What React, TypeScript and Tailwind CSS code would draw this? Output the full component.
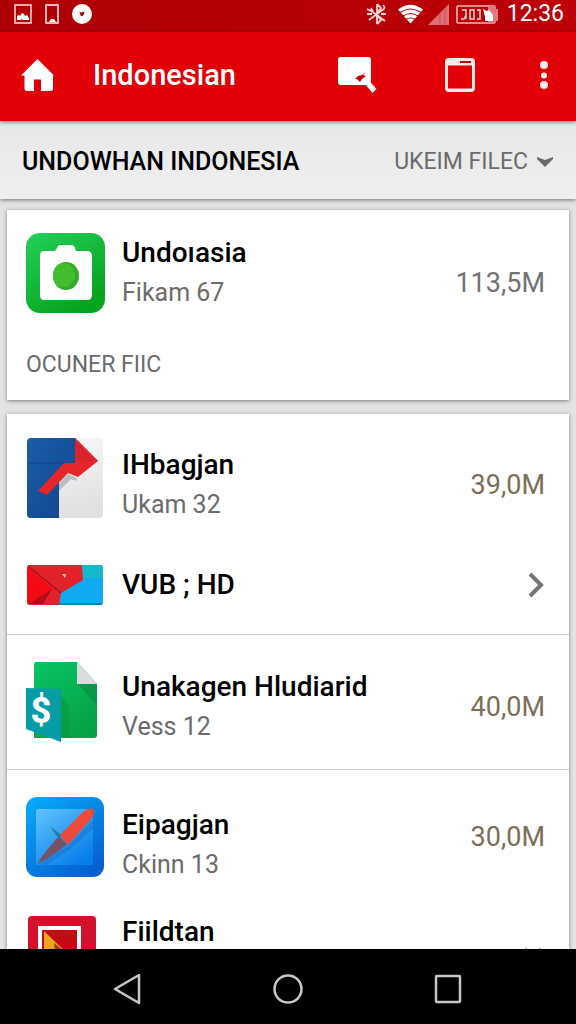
import type { ReactNode } from "react";

function StatusBar() {
  return (
    <div className="flex h-8 shrink-0 items-center justify-between bg-linear-to-r from-[#ad0005] to-[#be0008] pr-3 pl-3.5 text-white">
      <div className="flex items-center gap-3 pb-1">
        <svg width="18" height="20" viewBox="0 0 18 20" aria-hidden="true">
          <rect x="1" y="1" width="16" height="18" fill="none" stroke="#ffdcdc" strokeWidth="1.5" />
          <path d="M3 16v-4l2-1 1 1 2-3 2 1 1 2 2-1 2 3v2H9l-1-1-1 1z" fill="#fff" />
        </svg>
        <svg width="16" height="20" viewBox="0 0 16 20" aria-hidden="true">
          <rect x="2" y="1" width="12" height="18" fill="none" stroke="#ffd5d5" strokeWidth="1.7" />
          <path d="M5 18l2-3h3l2 3z" fill="#fff" />
        </svg>
        <svg width="20" height="20" viewBox="0 0 20 20" aria-hidden="true">
          <circle cx="10" cy="10" r="10" fill="#fff" />
          <path d="M7.500 8l2 .5L12.500 7.500l-.5 3-2 2-1.500-1z" fill="#8c1015" />
        </svg>
      </div>
      <div className="flex items-center pb-1">
        <svg width="21" height="22" viewBox="0 0 21 22" fill="none" stroke="#ffd5d5" strokeWidth="1.8" aria-hidden="true">
          <path d="M11 1v20M1 6l4 2 6 4 8 6M3 17l8-6 8-6M11 1l4 4-4 5M11 21l4-4-4-5M1 11h5M15 11h5M5 5l2 4M17 2l2 3" />
        </svg>
        <svg className="ml-2.5" width="27" height="20" viewBox="0 0 27 20" aria-hidden="true">
          <path d="M1 5.500Q13.500-4 26 5.500L13.500 19.500z" fill="#fff" />
          <path d="M3 8.500q10.500-7 21 0M6 12q7.500-5 15 0M9 15.500q4.500-3 9 0" fill="none" stroke="#b90006" strokeWidth="1.1" />
        </svg>
        <svg className="ml-1" width="22" height="21" viewBox="0 0 22 21" aria-hidden="true">
          <path d="M21 0v21H0z" fill="#dc7074" />
          <path d="M12 9v12M17 4v17" stroke="#cf4d52" strokeWidth="1" />
        </svg>
        <svg className="ml-1.5" width="43" height="19" viewBox="0 0 43 19" aria-hidden="true">
          <rect x="1" y="1" width="38" height="17" rx="1" fill="none" stroke="#f5b5b7" strokeWidth="1.6" />
          <path d="M32 1h8v3h2v12h-3v2h-7z" fill="#e17a80" />
          <path d="M27 4l4 2 2-1 4 5v6h-8v-4z" fill="#fff" />
          <path d="M6 5h4v5l-2 4H5M10 5v9M14 5h4v9h-4zM21 5h3v9h-3M24 4v4" fill="none" stroke="#ffd5d5" strokeWidth="1.5" />
        </svg>
        <span className="ml-2 text-[23px] leading-6">12:36</span>
      </div>
    </div>
  );
}

function AppBar() {
  return (
    <header className="z-20 flex h-[89px] shrink-0 items-center bg-[#e00006] pr-[26px] pb-1 pl-5 text-white shadow-[0_1px_4px_rgba(0,0,0,0.5)]">
      <button type="button" aria-label="Home">
        <svg width="35" height="34" viewBox="0 0 35 34" aria-hidden="true">
          <path d="M17.500 1L34 17.500H33V31q0 2-2 2H21V21.500h-7V33H6.500q-2 0-2-2V17.500H1z" fill="#fff" />
        </svg>
      </button>
      <h1 className="ml-[38px] flex-1 text-[29px] leading-10 font-medium">Indonesian</h1>
      <button type="button" aria-label="Find in screen">
        <svg width="40" height="38" viewBox="0 0 40 38" aria-hidden="true">
          <rect x="1" y="1" width="33" height="28" rx="3" fill="#fff" />
          <path d="M24.500 24l3.500-4 11.500 13-4 4z" fill="#fff" />
          <path d="M18 23l3-3 4-1 4-4-3 4 3 1-4 3-2 3-3-3z" fill="#c80006" />
        </svg>
      </button>
      <button type="button" aria-label="Window" className="ml-[67px]">
        <svg width="32" height="36" viewBox="0 0 32 36" aria-hidden="true">
          <path fillRule="evenodd" d="M5 1h22q4 0 4 4v26q0 4-4 4H5q-4 0-4-4V5q0-4 4-4zM4 8.500v23h24V8.500z" fill="#ffe8e8" />
          <path d="M16 5h11" stroke="#c80006" strokeWidth="2" />
        </svg>
      </button>
      <button type="button" aria-label="More options" className="ml-[62px]">
        <svg width="12" height="30" viewBox="0 0 12 30" fill="#ffecec" aria-hidden="true">
          <circle cx="6" cy="5" r="4" />
          <circle cx="6" cy="15.500" r="3" />
          <circle cx="6" cy="25" r="4" />
        </svg>
      </button>
    </header>
  );
}

function CameraIcon() {
  return (
    <svg width="80" height="80" viewBox="0 0 80 80" aria-hidden="true">
      <defs>
        <linearGradient id="camera" x1="0" y1="0" x2="0.6" y2="1">
          <stop offset="0" stopColor="#23d15a" />
          <stop offset="1" stopColor="#06a31d" />
        </linearGradient>
      </defs>
      <rect width="79" height="80" rx="14" fill="url(#camera)" />
      <path d="M18 18h11l2-3q1-3 4-3h10q3 0 4 3l1 3h11q5 0 5 5v39q0 5-5 5H18q-4 0-4-5V23q0-5 4-5z" fill="#fff" />
      <ellipse cx="40" cy="43" rx="13" ry="14" fill="#2fab29" />
      <ellipse cx="38" cy="42" rx="11" ry="12" fill="#43bd2d" />
    </svg>
  );
}

function ArrowIcon() {
  return (
    <svg width="80" height="80" viewBox="0 0 80 80" aria-hidden="true">
      <defs>
        <linearGradient id="sheet" x1="0" y1="0" x2="0.3" y2="1">
          <stop offset="0" stopColor="#fcfcfc" />
          <stop offset="1" stopColor="#e1e1e3" />
        </linearGradient>
        <linearGradient id="navy" x1="0" y1="0" x2="1" y2="1">
          <stop offset="0" stopColor="#1a5daa" />
          <stop offset="1" stopColor="#10458c" />
        </linearGradient>
      </defs>
      <rect x="1" width="76" height="80" rx="4" fill="url(#sheet)" />
      <path d="M5 0h45v26L33 44v36H5q-4 0-4-4V4q0-4 4-4z" fill="url(#navy)" />
      <path d="M1 25h48" stroke="#0d4288" strokeWidth="1" />
      <path d="M33 45l9-9 9 4-1 3-5-2-12 12z" fill="#b9bec6" />
      <path d="M49 0l23 23-20 16-10-4-21 22-9-4 26-28h11z" fill="#e6262b" />
      <path d="M49 0l23 23H49z" fill="#d9242b" />
    </svg>
  );
}

function MailIcon() {
  return (
    <svg width="80" height="42" viewBox="0 0 80 42" aria-hidden="true">
      <rect x="1" y="1" width="76" height="40" rx="3" fill="#10aaf0" />
      <path d="M55 1h19q3 0 3 3v10H55z" fill="#12b9cb" />
      <path d="M3 1h53l1 15-22 13-2 12H4q-3 0-3-3V3z" fill="#e2222b" />
      <path d="M1 3l26 22L3 40l-2-2z" fill="#f50915" />
      <path d="M2 2l33 27" fill="none" stroke="#a60f1c" strokeWidth="1.5" />
      <path d="M26 25L3 40h14z" fill="#b30d19" />
      <path d="M36 10h4l-1 4z" fill="#ffc1c1" />
      <path d="M33 40h43" stroke="#0783bd" strokeWidth="2" />
    </svg>
  );
}

function SheetIcon() {
  return (
    <svg width="80" height="82" viewBox="0 0 80 82" aria-hidden="true">
      <defs>
        <linearGradient id="paper" x1="0" y1="0" x2="0.6" y2="1">
          <stop offset="0" stopColor="#08c466" />
          <stop offset="1" stopColor="#06a345" />
        </linearGradient>
      </defs>
      <path d="M10 1h41l20 22v51q0 3-3 3H8V4q0-3 2-3z" fill="url(#paper)" />
      <path d="M52 23h19v22z" fill="#069848" />
      <path d="M51 1l20 22H51z" fill="#dadbdc" />
      <path d="M34 34l9 11v32h-9z" fill="#089444" opacity=".6" />
      <path d="M0 27l35 1v53L0 68z" fill="#089ca7" />
      <text x="15" y="62" textAnchor="middle" fontFamily="Roboto, sans-serif" fontSize="36" fontWeight="800" fill="#fff">$</text>
    </svg>
  );
}

function CompassIcon() {
  return (
    <svg width="80" height="80" viewBox="0 0 80 80" aria-hidden="true">
      <defs>
        <linearGradient id="azure" x1="0" y1="0" x2="0.7" y2="1">
          <stop offset="0" stopColor="#08adfa" />
          <stop offset="1" stopColor="#0561d2" />
        </linearGradient>
        <linearGradient id="glass" x1="0" y1="0" x2="0.7" y2="1">
          <stop offset="0" stopColor="#62c4fc" />
          <stop offset="1" stopColor="#087eea" />
        </linearGradient>
      </defs>
      <rect width="78" height="80" rx="11" fill="url(#azure)" />
      <rect x="10" y="12" width="57" height="56" rx="2" fill="url(#glass)" />
      <path d="M12 67l30-18 25-27v10L43 53 20 68z" fill="#0864bd" opacity=".35" />
      <path d="M33 39l8 8Q32 56 11 67 20 53 33 39z" fill="#765266" />
      <path d="M24 29l11 9-2 4z" fill="#227aa2" />
      <path d="M34 38l23-23q8-6 11-2 1 4-3 9L42 48z" fill="#ef4939" />
    </svg>
  );
}

function FrameIcon() {
  return (
    <svg width="80" height="80" viewBox="0 0 80 80" aria-hidden="true">
      <rect x="2" width="68" height="80" rx="4" fill="#d5102c" />
      <rect x="14" y="12" width="39" height="48" fill="#c40a12" stroke="#fff" strokeWidth="4" />
      <path d="M18 15l29 28H18z" fill="#efa522" />
      <path d="M28 27l10 8-9 1z" fill="#9b3b12" />
    </svg>
  );
}

function FileText({ title, detail }: { title: string; detail?: string }) {
  return (
    <div className="ml-4 flex-1 whitespace-nowrap">
      <h2 className="text-[28px] leading-10 font-medium text-black">{title}</h2>
      {detail && <p className="text-[25px] leading-10 text-[#6b6b6b]">{detail}</p>}
    </div>
  );
}

function Size({ children }: { children: ReactNode }) {
  return <span className="text-[27px] leading-10 text-[#7c6e56]">{children}</span>;
}

function NavBar() {
  return (
    <nav className="flex h-[75px] shrink-0 items-center justify-center gap-[126px] bg-black pt-1">
      <button type="button" aria-label="Back">
        <svg width="34" height="34" viewBox="0 0 34 34" fill="none" stroke="#c9c6c3" strokeWidth="2.5" strokeLinejoin="round" aria-hidden="true">
          <path d="M28 3v28L4 17z" />
        </svg>
      </button>
      <button type="button" aria-label="Home screen">
        <svg width="34" height="34" viewBox="0 0 34 34" fill="none" stroke="#c9c6c3" strokeWidth="2.5" aria-hidden="true">
          <circle cx="17" cy="17" r="13.500" />
        </svg>
      </button>
      <button type="button" aria-label="Recent apps">
        <svg width="34" height="34" viewBox="0 0 34 34" fill="none" stroke="#c9c6c3" strokeWidth="2.5" aria-hidden="true">
          <rect x="5" y="4" width="24" height="26" rx="1" />
        </svg>
      </button>
    </nav>
  );
}

export default function App() {
  return (
    <div className="flex h-dvh flex-col overflow-hidden bg-[#e2e3e4] font-['Roboto',sans-serif]">
      <StatusBar />
      <AppBar />
      <div className="z-10 flex h-[78px] shrink-0 items-center justify-between bg-linear-to-b from-[#e7e8e9] to-[#efeff0] px-[22px] pt-1 whitespace-nowrap shadow-[0_1px_4px_rgba(0,0,0,0.5)]">
        <h2 className="text-[25px] leading-10 font-medium text-black">UNDOWHAN INDONESIA</h2>
        <button type="button" className="flex items-center gap-2 text-[23px] leading-10 text-[#6b6b6b]">
          UKEIM FILEC
          <svg width="18" height="12" viewBox="0 0 18 12" aria-hidden="true">
            <path d="M1 1l8 3 8-3v2L9 11 1 3z" fill="#696969" />
          </svg>
        </button>
      </div>
      <main className="min-h-0 flex-1 overflow-hidden px-[7px] pt-[11px]">
        <section className="bg-white pr-6 pb-[15px] pl-[19px] shadow-[0_1px_4px_rgba(0,0,0,0.45)]">
          <div className="flex items-end pt-[23px]">
            <CameraIcon />
            <FileText title="Undoıasia" detail="Fikam 67" />
            <span className="pb-[10px] text-[27px] leading-10 text-[#727272]">113,5M</span>
          </div>
          <p className="mt-8 text-[23px] leading-10 text-[#6b6b6b]">OCUNER FIIC</p>
        </section>
        <section className="mt-[14px] divide-y divide-[#c8c8c8] bg-white shadow-[0_1px_4px_rgba(0,0,0,0.45)]">
          <div className="pr-6 pb-7 pl-[19px]">
            <div className="flex items-center pt-[31px]">
              <div className="-mt-[14px]">
                <ArrowIcon />
              </div>
              <FileText title="IHbagjan" detail="Ukam 32" />
              <Size>39,0M</Size>
            </div>
            <a href="#archive" className="mt-[39px] flex items-center">
              <MailIcon />
              <FileText title="VUB ; HD" />
              <svg width="18" height="28" viewBox="0 0 18 28" fill="none" stroke="#747474" strokeWidth="4" aria-hidden="true">
                <path d="M3 3l11 11L3 25" />
              </svg>
            </a>
          </div>
          <div className="flex items-start pt-[26px] pr-6 pb-[22px] pl-[19px]">
            <SheetIcon />
            <div className="flex flex-1 items-center pt-[6px]">
              <FileText title="Unakagen Hludiarid" detail="Vess 12" />
              <Size>40,0M</Size>
            </div>
          </div>
          <div>
            <div className="flex items-start pt-[27px] pr-6 pl-[19px]">
              <CompassIcon />
              <div className="flex-1 pt-2">
                <FileText title="Eipagjan" detail="Ckinn 13" />
              </div>
              <div className="pt-5">
                <Size>30,0M</Size>
              </div>
            </div>
            <div className="flex items-start pt-[27px] pr-6 pl-[19px]">
              <div className="pt-1">
                <FrameIcon />
              </div>
              <FileText title="Fiildtan" />
              <svg className="mt-[35px]" width="24" height="16" viewBox="0 0 24 16" fill="none" stroke="#777" strokeWidth="4" aria-hidden="true">
                <path d="M4 2l8 10 8-10" />
              </svg>
            </div>
          </div>
        </section>
      </main>
      <NavBar />
    </div>
  );
}
